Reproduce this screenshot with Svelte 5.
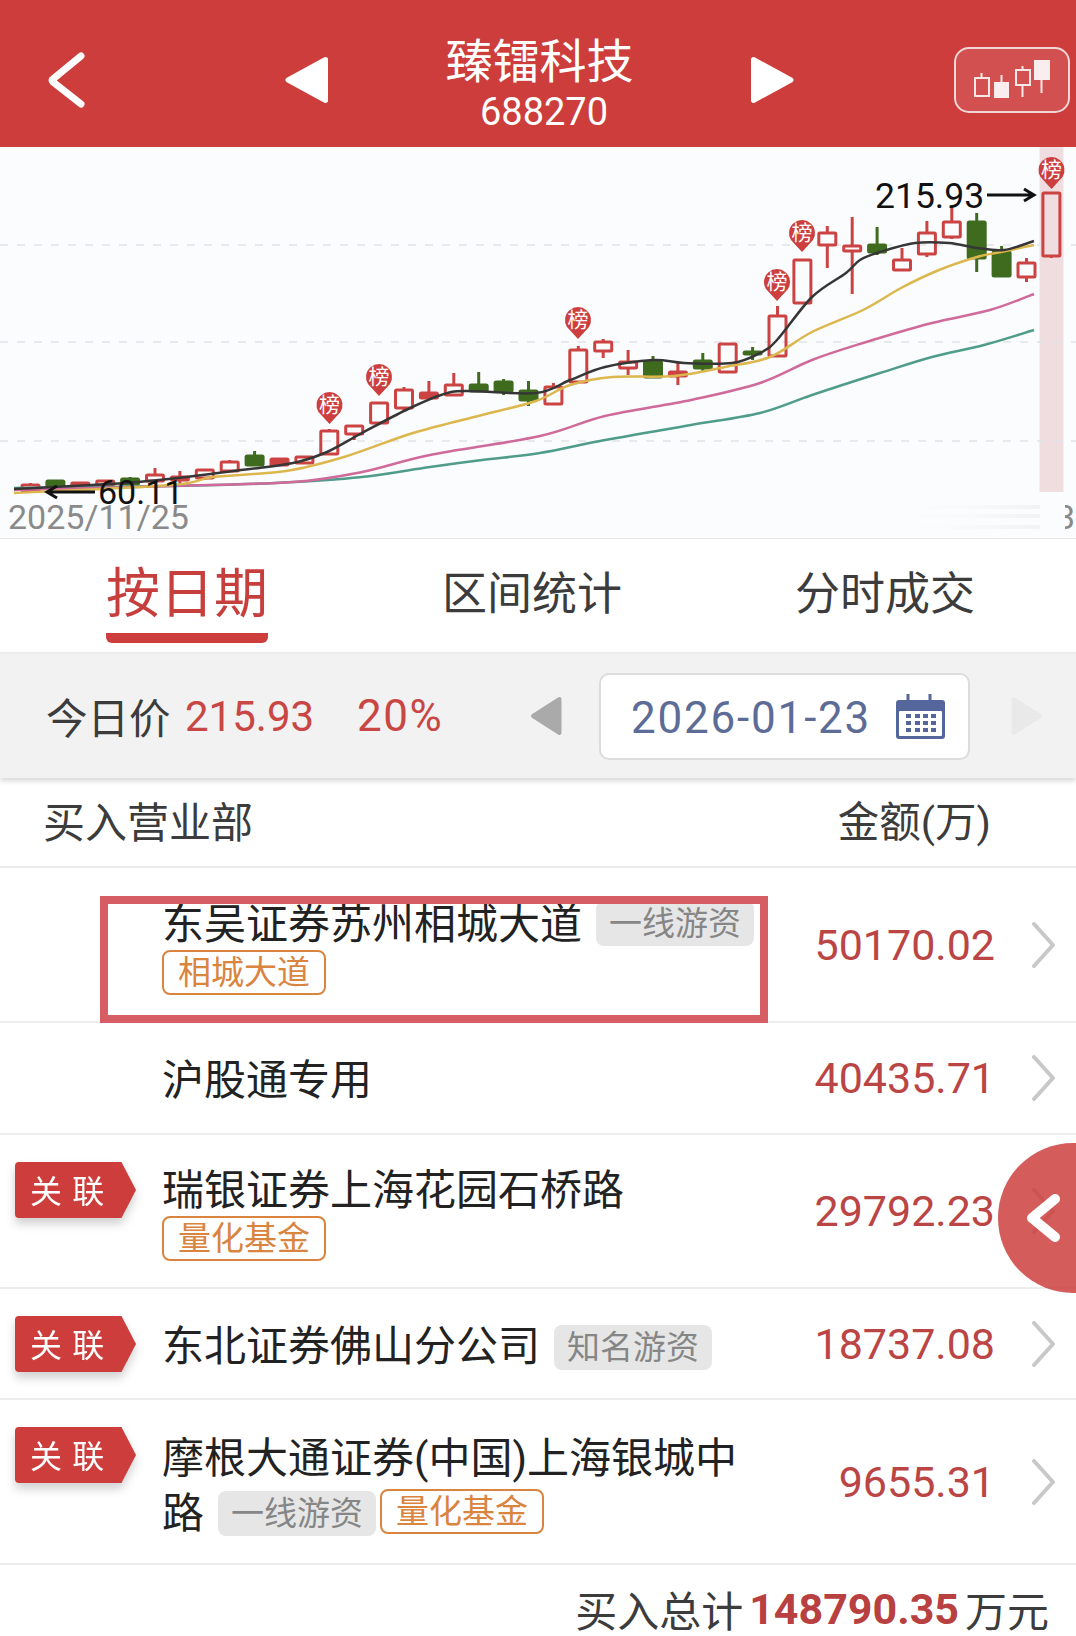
<script>
  // [kind, high, bodyTop, bodyBottom, low]; kind: h hollow, s solid red, g green
  const candles = [
    ['h',483,485,491,491],['g',481,481,487,487],['s',483,483,489,489],['h',480,481,485,486],
    ['g',477,479,484,484],['h',468,475,481,483],['s',471,477,480,484],['h',470,470,478,480],
    ['h',460,462,471,472],['g',451,456,465,465],['s',459,459,465,465],['h',456,457,463,463],
    ['h',429,431,454,455],['h',426,426,434,440],['h',403,403,423,423],['h',387,390,408,412],
    ['s',381,393,398,400],['h',373,385,395,396],['g',372,385,391,391],['g',379,382,391,395],
    ['g',381,391,400,406],['h',383,387,404,404],['h',346,350,382,382],['h',339,342,351,358],
    ['h',350,362,368,375],['g',356,362,377,377],['s',363,372,376,385],['g',353,361,368,371],
    ['h',344,344,372,372],['g',347,352,354,360],['h',306,316,356,356],['h',260,260,303,303],
    ['h',226,233,245,268],['h',217,246,251,294],['g',227,245,252,255],['h',248,260,270,270],
    ['h',221,233,254,257],['h',207,222,237,239],['g',213,222,258,272],['g',246,252,276,276],
    ['h',258,263,277,282],['h',192,193,256,258]
  ];
  const candleX = (i) => 30.5 + i * 24.9;

  // Runs a smooth curve through the points
  function smooth(p) {
    let d = `M${p[0][0]} ${p[0][1]}`;
    for (let i = 0; i < p.length - 1; i++) {
      const a = p[Math.max(i - 1, 0)], b = p[i], c = p[i + 1], e = p[Math.min(i + 2, p.length - 1)];
      const c1x = b[0] + (c[0] - a[0]) / 6, c1y = b[1] + (c[1] - a[1]) / 6;
      const c2x = c[0] - (e[0] - b[0]) / 6, c2y = c[1] - (e[1] - b[1]) / 6;
      d += ` C${c1x.toFixed(1)} ${c1y.toFixed(1)} ${c2x.toFixed(1)} ${c2y.toFixed(1)} ${c[0]} ${c[1]}`;
    }
    return d;
  }

  const averages = [
    { cls: 'ma-green', pts: [[14,488],[172,486],[275,483],[362,477],[430,467],[482,460],[540,453],[605,440],[691,425],[760,413],[812,395],[880,373],[932,357],[984,345],[1034,330]] },
    { cls: 'ma-pink', pts: [[14,490],[172,486],[293,482],[362,472],[430,455],[540,436],[605,416],[691,400],[760,383],[812,360],[863,343],[932,323],[990,310],[1034,294]] },
    { cls: 'ma-yellow', pts: [[14,493],[172,485],[213,477],[286,471],[344,457],[413,433],[482,415],[536,401],[570,385],[612,377],[674,376],[725,367],[770,357],[812,332],[863,310],[901,288],[939,270],[977,257],[1001,252],[1034,245]] },
    { cls: 'ma-black', pts: [[14,489],[138,482],[241,470],[293,463],[327,452],[362,433],[406,410],[441,395],[465,391],[536,393],[570,380],[605,367],[653,360],[684,363],[732,363],[760,353],[777,340],[812,297],[846,273],[860,260],[880,252],[915,243],[949,243],[977,248],[1004,250],[1034,241]] }
  ];

  // Marker pins: centre of the head, tip below it
  const pins = [[329.5,405],[379,377],[578,320],[777,282],[802,233],[1051.5,170]];

  const rows = [
    { size: 'r1', text: '东吴证券苏州相城大道', grey: '一线游资', orange: '相城大道', amount: '50170.02', marked: true },
    { size: 'r2', text: '沪股通专用', amount: '40435.71' },
    { size: 'r3', text: '瑞银证券上海花园石桥路', orange: '量化基金', amount: '29792.23', linked: true },
    { size: 'r4', text: '东北证券佛山分公司', grey: '知名游资', amount: '18737.08', linked: true },
    { size: 'r5', text: '摩根大通证券(中国)上海银城中路', grey: '一线游资', orange: '量化基金', amount: '9655.31', linked: true }
  ];
</script>

<div class="page">
  <header class="top">
    <svg class="back" width="38" height="56" viewBox="0 0 38 56"><path d="M33 4 L5 27 Q3 28 5 30 L33 52" /></svg>
    <svg class="prev" width="43" height="48" viewBox="0 0 43 48"><path d="M40.500 3.500 L3 24 L40.500 44.500 Z" /></svg>
    <div class="title">
      <div class="name">臻镭科技</div>
      <div class="code">688270</div>
    </div>
    <svg class="next" width="43" height="48" viewBox="0 0 43 48"><path d="M2.500 3.500 L40 24 L2.500 44.500 Z" /></svg>
    <div class="kline-btn">
      <svg width="114" height="66" viewBox="0 0 114 66">
        <g class="ki-line"><path d="M27.500 26 V31 M27.500 49 V50 M47.500 28 V35 M68.500 19 V23 M68.500 38 V50 M87.500 33 V46" /></g>
        <rect class="ki-hollow" x="21" y="31" width="14" height="18" />
        <rect class="ki-solid" x="40" y="35" width="15" height="16" />
        <rect class="ki-hollow" x="62" y="23" width="14" height="15" />
        <rect class="ki-solid" x="80" y="13" width="16" height="20" />
      </svg>
    </div>
  </header>

  <section class="chart">
    <svg width="1076" height="391" viewBox="0 147 1076 391">
      <defs>
        <linearGradient id="fade" x1="0" x2="1" y1="0" y2="0">
          <stop offset="0" stop-color="#fbfcfe" stop-opacity="0" />
          <stop offset="1" stop-color="#d0d0d0" stop-opacity="0.6" />
        </linearGradient>
      </defs>
      <rect class="today" x="1039.500" y="147" width="24" height="345" />
      <path class="grid" d="M0 245 H1076 M0 342 H1076 M0 441 H1076" />
      {#each candles as c, i}
        <path class={'wick ' + c[0]} d={`M${candleX(i)} ${c[1]} V${c[2]} M${candleX(i)} ${c[3]} V${c[4]}`} />
        <rect class={'body ' + c[0]} x={candleX(i) - 8.5} y={c[2]} width="17" height={c[3] - c[2]} rx="1" />
      {/each}
      {#each averages as m}
        <path class={'ma ' + m.cls} d={smooth(m.pts)} />
      {/each}
      {#each pins as p}
        <g>
          <path class="pin" d={`M${p[0]} ${p[1] + 19} L${p[0] - 11} ${p[1] + 7} A13 13 0 1 1 ${p[0] + 11} ${p[1] + 7} Z`} />
          <text class="pin-text" x={p[0]} y={p[1] + 7} text-anchor="middle">榜</text>
        </g>
      {/each}
      <text class="price high" x="875" y="208">215.93</text>
      <path class="arrow" d="M987 195 H1034 M1024 189 L1034 195 L1024 201" />
      <path class="arrow" d="M95 492 H47 M57 486 L47 492 L57 498" />
      <text class="price" x="98" y="504">60.11</text>
      <text class="stamp" x="8" y="529">2025/11/25</text>
      <rect class="streak" x="880" y="505" width="185" height="4" />
      <rect class="streak" x="880" y="514" width="185" height="4" />
      <rect class="streak" x="880" y="525" width="185" height="4" />
      <text class="stamp" x="1056" y="529">3</text>
      <rect class="veil" x="1040" y="498" width="25" height="36" />
    </svg>
  </section>

  <nav class="tabs">
    <div class="tab active">按日期</div>
    <div class="tab second">区间统计</div>
    <div class="tab third">分时成交</div>
  </nav>

  <section class="quote">
    <span class="q-label">今日价</span>
    <span class="q-price">215.93</span>
    <span class="q-pct">20%</span>
    <svg class="q-prev" width="32" height="40" viewBox="0 0 32 40"><path d="M29.500 3 L3 20 L29.500 37 Z" /></svg>
    <div class="datebox">
      <span class="date">2026-01-23</span>
      <svg width="49" height="46" viewBox="0 0 49 46">
        <rect class="cal" x="0" y="7" width="49" height="39" rx="3" />
        <rect class="cal-inner" x="3" y="18" width="43" height="25" rx="1" />
        <path class="cal-ring" d="M12 1 V12 M34 1 V12" />
        <g class="cal">
          <rect x="10" y="21" width="5" height="4" /><rect x="19" y="21" width="5" height="4" /><rect x="27" y="21" width="5" height="4" /><rect x="35" y="21" width="5" height="4" />
          <rect x="10" y="28" width="5" height="4" /><rect x="19" y="28" width="5" height="4" /><rect x="27" y="28" width="5" height="4" /><rect x="35" y="28" width="5" height="4" />
          <rect x="10" y="35" width="5" height="4" /><rect x="19" y="35" width="5" height="4" /><rect x="27" y="35" width="5" height="4" /><rect x="35" y="35" width="5" height="4" />
        </g>
      </svg>
    </div>
    <svg class="q-next" width="32" height="40" viewBox="0 0 32 40"><path d="M2.500 3 L29 20 L2.500 37 Z" /></svg>
  </section>

  <div class="thead">
    <span>买入营业部</span>
    <span class="thead-right">金额(万)</span>
  </div>

  <div class="list">
    {#each rows as r}
      <div class={'row ' + r.size}>
        <div class="lead">
          {#if r.linked}
            <div class="flag-wrap"><div class="flag">关 联</div></div>
          {/if}
        </div>
        <div class="who"><span class="who-text">{r.text}</span>{#if r.grey}<span class="tag grey">{r.grey}</span>{/if}{#if r.orange}<span class="tag orange">{r.orange}</span>{/if}</div>
        <div class="amount">{r.amount}</div>
        <svg class="chev" width="24" height="46" viewBox="0 0 24 46"><path d="M2 2 L21 23 L2 44" /></svg>
        {#if r.marked}<div class="mark"></div>{/if}
      </div>
    {/each}
    <div class="fold">
      <svg width="36" height="48" viewBox="0 0 36 48"><path d="M30 5 L7 24 L30 43" /></svg>
    </div>
  </div>

  <footer class="total">
    <span>买入总计</span>
    <strong>148790.35</strong>
    <span>万元</span>
  </footer>
</div>

<style>
  :global(body) { margin: 0; background: #fff; }
  .page {
    width: 1076px;
    height: 1636px;
    overflow: hidden;
    background: #fff;
    font-family: Roboto, "Noto Sans CJK SC", sans-serif;
    color: #333;
  }

  /* Header */
  .top {
    height: 147px;
    box-sizing: border-box;
    background: #cc3d3b;
    display: flex;
    align-items: center;
    color: #fff;
    padding-left: 48px;
  }
  .top svg { flex: none; }
  .back { margin-top: 13px; }
  .back path { fill: none; stroke: #fff; stroke-width: 7; stroke-linecap: round; stroke-linejoin: round; }
  .prev { margin-left: 199px; margin-top: 13px; }
  .next { margin-top: 13px; }
  .prev path, .next path { fill: #fff; stroke: #fff; stroke-width: 5; stroke-linejoin: round; }
  .title { width: 423px; flex: none; text-align: center; margin-top: 20px; }
  .title .name { font-size: 47px; line-height: 56px; }
  .title .code { font-size: 38px; line-height: 44px; padding-left: 9px; }
  .kline-btn {
    margin-left: 160px;
    margin-top: 13px;
    width: 116px;
    height: 66px;
    flex: none;
    box-sizing: border-box;
    border: 2px solid #f1d6d5;
    border-radius: 15px;
    background: #d25050;
  }
  .kline-btn svg { margin: -2px; display: block; }
  .ki-line path { stroke: #f7e7e6; stroke-width: 2; fill: none; }
  .ki-hollow { fill: none; stroke: #f7e7e6; stroke-width: 2; }
  .ki-solid { fill: #f9eeed; }

  /* Chart */
  .chart { height: 391px; background: #fbfcfe; box-shadow: 0 1px 0 #e6e6e6; position: relative; }
  .chart svg { display: block; }
  .today { fill: #f0dde0; }
  .grid { stroke: #e0e4e7; stroke-width: 1.5; stroke-dasharray: 8 9; fill: none; }
  .wick { stroke-width: 3; fill: none; }
  .wick.h, .wick.s { stroke: #cb4443; }
  .wick.g { stroke: #3f6b1e; }
  .body { stroke-width: 3; }
  .body.h { fill: none; stroke: #cb4443; }
  .body.s { fill: #cb4443; stroke: #cb4443; }
  .body.g { fill: #3f6b1e; stroke: #3f6b1e; }
  .ma { fill: none; stroke-width: 2.5; stroke-linejoin: round; }
  .ma-black { stroke: #363636; }
  .ma-yellow { stroke: #dcb74e; }
  .ma-pink { stroke: #cf6a9a; }
  .ma-green { stroke: #4f9c8a; }
  .pin { fill: #cc3f3e; }
  .pin-text { fill: #fff; font-size: 21px; font-family: "Noto Sans CJK SC", sans-serif; }
  .price { font-size: 34px; fill: #111; font-family: Roboto, sans-serif; }
  .price.high { font-size: 35.500px; }
  .arrow { fill: none; stroke: #111; stroke-width: 3; }
  .stamp { font-size: 34px; fill: #8a8a8a; font-family: Roboto, sans-serif; }
  .streak { fill: url(#fade); opacity: 0.5; }
  .veil { fill: #fbfcfe; }

  /* Tabs */
  .tabs {
    height: 114px;
    display: flex;
    padding-left: 106px;
    background: #fff;
    box-sizing: border-box;
  }
  .tab { font-size: 45px; line-height: 114px; color: #3c3c3c; white-space: nowrap; }
  .tab.active {
    width: 162px;
    height: 95px;
    font-size: 54px;
    line-height: 114px;
    color: #c63f3d;
    text-align: center;
    border-bottom: 10px solid #cc3d3b;
    border-radius: 0 0 6px 6px;
  }
  .tab.second { margin-left: 174px; }
  .tab.third { margin-left: 173px; }

  /* Price strip */
  .quote {
    height: 126px;
    box-sizing: border-box;
    background: #f2f2f2;
    border-top: 2px solid #ececec;
    box-shadow: 0 3px 5px rgba(0, 0, 0, 0.16);
    display: flex;
    align-items: center;
    padding-left: 46px;
    position: relative;
    z-index: 1;
  }
  .q-label { font-size: 41.500px; color: #3c3c3c; width: 139px; white-space: nowrap; }
  .q-price { font-size: 42px; color: #c84643; width: 172px; }
  .q-pct { font-size: 44px; letter-spacing: 1.500px; color: #c84643; width: 173px; }
  .q-prev path { fill: #aaa; stroke: #aaa; stroke-width: 4; stroke-linejoin: round; }
  .q-next { margin-left: 41px; }
  .q-next path { fill: #e9e9e9; stroke: #e9e9e9; stroke-width: 4; stroke-linejoin: round; }
  .datebox {
    margin-left: 37px;
    width: 371px;
    height: 87px;
    flex: none;
    box-sizing: border-box;
    background: #fff;
    border: 2px solid #dcdcdc;
    border-radius: 10px;
    display: flex;
    align-items: center;
    padding-left: 30px;
  }
  .date { font-size: 44px; letter-spacing: 1.800px; color: #5d6c97; width: 265px; white-space: nowrap; padding-top: 4px; }
  .cal { fill: #54669b; }
  .cal-inner { fill: #fff; }
  .cal-ring { stroke: #54669b; stroke-width: 3; fill: none; }

  /* Table head */
  .thead {
    height: 90px;
    box-sizing: border-box;
    border-bottom: 2px solid #ededed;
    display: flex;
    align-items: center;
    justify-content: space-between;
    padding: 0 85px 6px 43px;
    font-size: 42px;
    color: #3c3c3c;
  }
  .thead-right { font-size: 41.500px; }

  /* Rows */
  .list { position: relative; }
  .row {
    box-sizing: border-box;
    border-bottom: 2px solid #ededed;
    display: flex;
    align-items: center;
    position: relative;
  }
  .r1 { height: 155px; }
  .r2 { height: 112px; }
  .r3 { height: 154px; }
  .r4 { height: 111px; }
  .r5 { height: 165px; }
  .lead { width: 162px; flex: none; align-self: flex-start; }
  .flag-wrap {
    margin: 27px 0 0 15px;
    width: 121px;
    filter: drop-shadow(0 6px 5px rgba(0, 0, 0, 0.18));
  }
  .flag {
    height: 56px;
    line-height: 54px;
    background: #cc3d3b;
    color: #fff;
    font-size: 32px;
    padding-left: 15px;
    box-sizing: border-box;
    border-radius: 4px 0 0 4px;
    clip-path: polygon(0 0, 88% 0, 100% 50%, 88% 100%, 0 100%);
    font-family: "Noto Sans CJK SC", sans-serif;
    letter-spacing: 1.500px;
    white-space: pre;
  }
  .who { width: 607px; flex: none; font-size: 42px; line-height: 50px; color: #222; padding-top: 6px; box-sizing: content-box; }
  .r1 .who { line-height: 47px; }
  .r3 .who { line-height: 46px; padding-top: 7px; }
  .r5 .who { line-height: 55px; padding-top: 8px; }
  .tag {
    display: inline-block;
    box-sizing: border-box;
    height: 45px;
    font-size: 33px;
    line-height: 41px;
    border-radius: 8px;
    white-space: nowrap;
    vertical-align: top;
    margin-top: 2px;
  }
  .r4 .tag { margin-top: 3px; }
  .r5 .tag { margin-top: 5px; }
  .tag.grey { background: #e6e6e6; color: #868686; padding: 2px 13px; margin-left: 14px; }
  .tag.orange { border: 2px solid #d9843f; color: #d9843f; padding: 0 14px; }
  .r1 .grey { margin-top: 0; }
  .r5 .orange { margin-left: 4px; margin-top: 3px; }
  .amount {
    width: 226px;
    flex: none;
    text-align: right;
    font-size: 43px;
    color: #bb4444;
  }
  .chev { margin-left: 37px; flex: none; }
  .chev path { fill: none; stroke: #c8c8c8; stroke-width: 4; stroke-linecap: round; stroke-linejoin: round; }
  .mark {
    position: absolute;
    left: 99.500px;
    top: 28px;
    width: 668px;
    height: 127px;
    box-sizing: border-box;
    border: 8px solid #d65d63;
  }
  .fold {
    position: absolute;
    left: 998px;
    top: 275px;
    width: 150px;
    height: 150px;
    border-radius: 50%;
    background: rgba(204, 61, 59, 0.84);
  }
  .fold svg { position: absolute; left: 27px; top: 51px; }
  .fold path { fill: none; stroke: #fff; stroke-width: 10; stroke-linecap: round; stroke-linejoin: round; }

  /* Total */
  .total {
    height: 71px;
    box-sizing: border-box;
    padding: 16px 27px 0 0;
    display: flex;
    align-items: center;
    justify-content: flex-end;
    gap: 6px;
    font-size: 42px;
    color: #3c3c3c;
  }
  .total strong { font-size: 43px; color: #b84040; font-weight: 700; }
</style>
